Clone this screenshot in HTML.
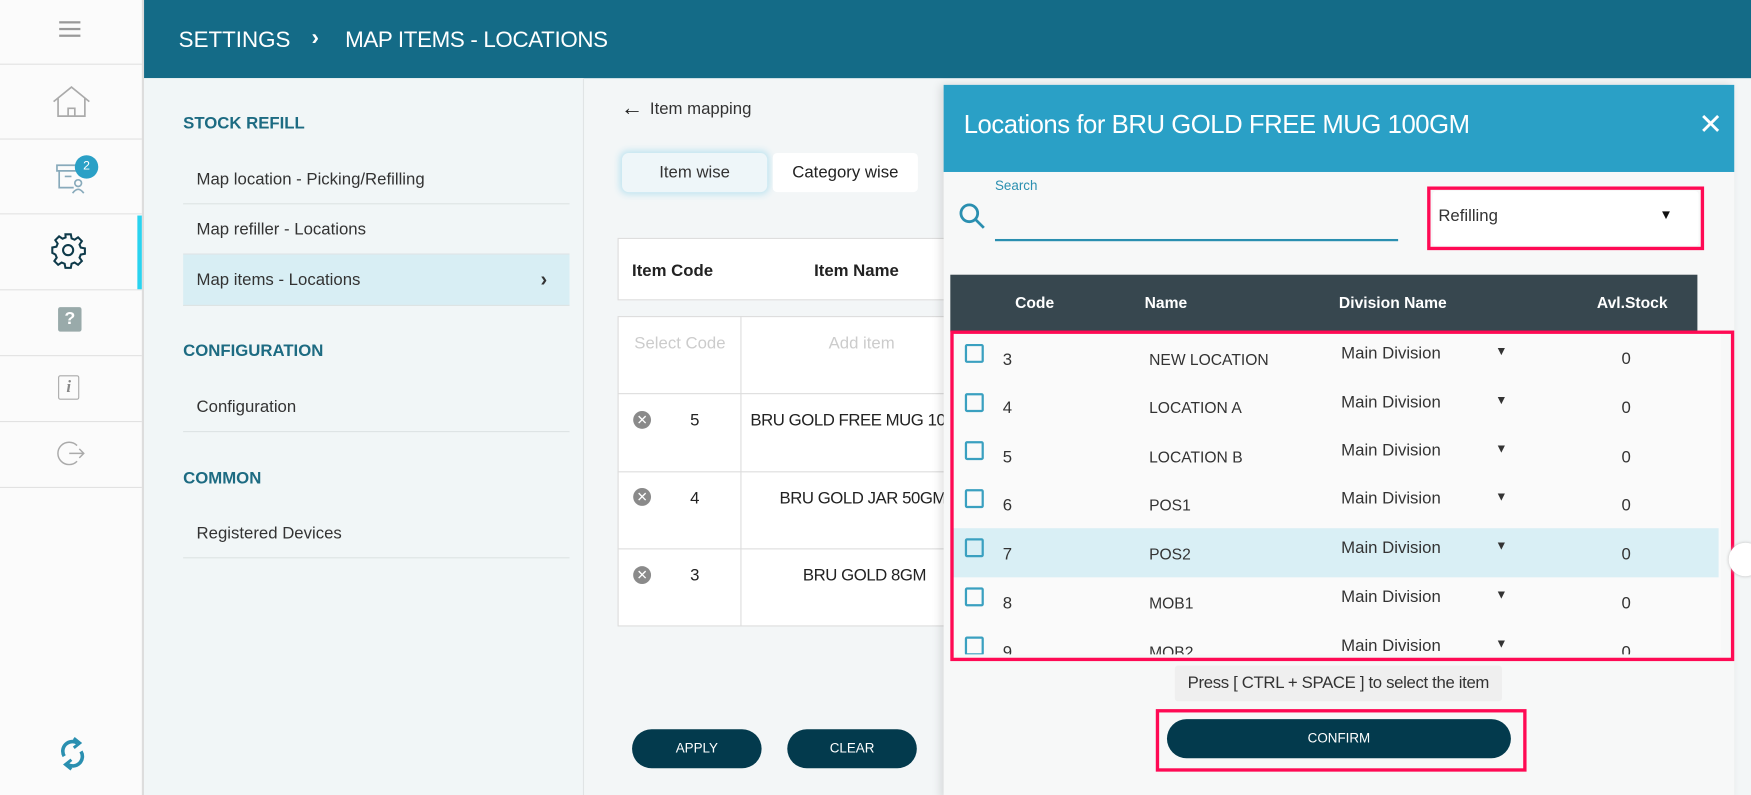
<!DOCTYPE html>
<html><head><meta charset="utf-8"><style>
*{box-sizing:border-box;margin:0;padding:0}
html,body{width:1751px;height:795px;overflow:hidden;background:#f3f6f7;font-family:"Liberation Sans",sans-serif}
#w{position:absolute;left:0;top:0;width:1568px;height:712px;transform:scale(1.11671);transform-origin:0 0;overflow:hidden}
.a{position:absolute}
.side{left:0;top:0;width:129px;height:712px;background:#fbfbfb;border-right:2px solid #ddd}
.sl{position:absolute;left:0;width:127px;height:1px;background:#e2e2e2}
.hdr{left:129px;top:0;width:1439px;height:70px;background:#146b87;color:#fff;font-size:20px}
.sp{left:129px;top:70px;width:394px;height:642px;background:#f1f6f7;border-right:1px solid #e0e4e5}
.h{position:absolute;left:35px;color:#1d6b82;font-weight:bold;font-size:15px}
.it{position:absolute;left:35px;width:346px;height:45px;line-height:45px;padding-left:12px;font-size:15px;color:#333;border-bottom:1px solid #dde3e4}
.cell{position:absolute;background:#fff;border:1px solid #ddd}
.btn{position:absolute;background:#033a4d;color:#fff;border-radius:18px;font-size:12px;text-align:center;line-height:35px}
.cb{position:absolute;left:13px;width:17px;height:17px;border:2px solid #3aa0c0;border-radius:2px}
.row{position:absolute;left:0;width:688px;height:44px;font-size:15px;color:#333}
.row span{position:absolute;top:15px}
</style></head><body><div id="w">
<div class="a side">
 <div class="a" style="left:53px;top:19px;width:19px;height:2px;background:#999;box-shadow:0 6px 0 #999,0 12px 0 #999"></div>
 <div class="sl" style="top:57px"></div><div class="sl" style="top:124px"></div><div class="sl" style="top:191px"></div><div class="sl" style="top:259px"></div><div class="sl" style="top:318px"></div><div class="sl" style="top:377px"></div><div class="sl" style="top:436px"></div>
 <svg class="a" style="left:46px;top:76px" width="36" height="30" viewBox="0 0 36 30" fill="none" stroke="#aaa" stroke-width="1.5"><path d="M2 15 L18 2 L34 15 M6 12 V28 H30 V12 M15 28 V21 H21 V28"/></svg>
 <svg class="a" style="left:48px;top:142px" width="34" height="32" viewBox="0 0 34 32" fill="none" stroke="#8ab" stroke-width="1.5"><path d="M3 6 H26 V11 H3 Z M5 11 V26 H18 M10 16 H16"/><circle cx="22" cy="22" r="3"/><path d="M17 31 Q22 24 27 31"/></svg>
 <div class="a" style="left:67px;top:139px;width:21px;height:21px;border-radius:50%;background:#2aa0c6;color:#fff;font-size:11px;text-align:center;line-height:21px">2</div>
 <svg class="a" style="left:44px;top:207px" width="34" height="34" viewBox="0 0 24 24" fill="none" stroke="#0e3a4a" stroke-width="1.3"><circle cx="12" cy="12" r="3.2"/><path d="M10.3 2h3.4l.5 2.6 1.9.8 2.2-1.5 2.4 2.4-1.5 2.2.8 1.9 2.6.5v3.4l-2.6.5-.8 1.9 1.5 2.2-2.4 2.4-2.2-1.5-1.9.8-.5 2.6h-3.4l-.5-2.6-1.9-.8-2.2 1.5-2.4-2.4 1.5-2.2-.8-1.9L2 13.7v-3.4l2.6-.5.8-1.9-1.5-2.2 2.4-2.4 2.2 1.5 1.9-.8z"/></svg>
 <div class="a" style="left:123px;top:193px;width:4px;height:66px;background:#2ad3ef"></div>
 <div class="a" style="left:52px;top:275px;width:21px;height:22px;background:#9aa;border-radius:2px;color:#fff;font-weight:bold;font-size:16px;text-align:center;line-height:22px">?</div>
 <div class="a" style="left:52px;top:336px;width:19px;height:22px;border:1.5px solid #aaa;border-radius:2px;color:#888;font-size:15px;font-weight:bold;font-style:italic;text-align:center;line-height:20px;font-family:'Liberation Serif',serif">i</div>
 <svg class="a" style="left:51px;top:394px" width="26" height="24" viewBox="0 0 26 24" fill="none" stroke="#aaa" stroke-width="1.3"><path d="M18 5 A10 10 0 1 0 18 19 M11 12 H24 M20 8 L24 12 L20 16"/></svg>
 <svg class="a" style="left:52px;top:660px" width="26" height="30" viewBox="0 0 24 28" fill="none" stroke="#2a8fb0" stroke-width="3"><path d="M5 16 A8 8 0 0 1 16 5 M19 12 A8 8 0 0 1 8 23"/><path d="M13 1 L18 5 L13 9 M11 19 L6 23 L11 27" stroke-width="2.5"/></svg>
</div>
<div class="a hdr"><span class="a" style="left:31px;top:25px">SETTINGS</span><span class="a" style="left:150px;top:23px;font-weight:bold">›</span><span class="a" style="left:180px;top:25px;letter-spacing:-0.3px">MAP ITEMS - LOCATIONS</span></div>
<div class="a sp">
 <div class="h" style="top:32px">STOCK REFILL</div>
 <div class="it" style="top:68px">Map location - Picking/Refilling</div>
 <div class="it" style="top:113px">Map refiller - Locations</div>
 <div class="it" style="top:158px;background:#d8eef4;height:46px">Map items - Locations<span style="position:absolute;right:20px;font-weight:bold;font-size:18px">›</span></div>
 <div class="h" style="top:236px">CONFIGURATION</div>
 <div class="it" style="top:272px">Configuration</div>
 <div class="h" style="top:350px">COMMON</div>
 <div class="it" style="top:385px">Registered Devices</div>
</div>
<div class="a" style="left:556px;top:86px;font-size:20px;color:#222">←</div>
<div class="a" style="left:582px;top:89px;font-size:15px;color:#333">Item mapping</div>
<div class="a" style="left:557px;top:137px;width:130px;height:35px;background:#eef6f9;border-radius:6px;box-shadow:0 0 6px 2px #bfe4f0;font-size:15px;color:#333;text-align:center;line-height:35px">Item wise</div>
<div class="a" style="left:692px;top:137px;width:130px;height:35px;background:#fff;border-radius:4px;font-size:15px;color:#222;text-align:center;line-height:35px">Category wise</div>
<div class="cell" style="left:553px;top:213px;width:320px;height:56px;font-size:15px;font-weight:bold;color:#222"><span class="a" style="left:12px;top:20px">Item Code</span><span class="a" style="left:175px;top:20px">Item Name</span></div>
<div class="cell" style="left:553px;top:283px;width:320px;height:278px"></div>
<div class="a" style="left:553px;top:352px;width:320px;height:1px;background:#ddd"></div>
<div class="a" style="left:553px;top:422px;width:320px;height:1px;background:#ddd"></div>
<div class="a" style="left:553px;top:491px;width:320px;height:1px;background:#ddd"></div>
<div class="a" style="left:663px;top:283px;width:1px;height:278px;background:#ddd"></div>
<div class="a" style="left:568px;top:299px;font-size:15px;color:#ccc">Select Code</div>
<div class="a" style="left:742px;top:299px;font-size:15px;color:#ccc">Add item</div>
<div class="a" style="left:567px;top:368px;width:16px;height:16px;border-radius:50%;background:#8a8a8a;color:#fff;font-size:12px;text-align:center;line-height:16px">✕</div>
<div class="a" style="left:567px;top:437px;width:16px;height:16px;border-radius:50%;background:#8a8a8a;color:#fff;font-size:12px;text-align:center;line-height:16px">✕</div>
<div class="a" style="left:567px;top:507px;width:16px;height:16px;border-radius:50%;background:#8a8a8a;color:#fff;font-size:12px;text-align:center;line-height:16px">✕</div>
<div class="a" style="left:618px;top:368px;font-size:15px;color:#222">5</div>
<div class="a" style="left:618px;top:438px;font-size:15px;color:#222">4</div>
<div class="a" style="left:618px;top:507px;font-size:15px;color:#222">3</div>
<div class="a" style="left:672px;top:368px;font-size:15px;color:#222;white-space:nowrap;letter-spacing:-0.4px">BRU GOLD FREE MUG 100GM</div>
<div class="a" style="left:698px;top:438px;font-size:15px;color:#222;white-space:nowrap;letter-spacing:-0.4px">BRU GOLD JAR 50GM</div>
<div class="a" style="left:719px;top:507px;font-size:15px;color:#222;letter-spacing:-0.4px">BRU GOLD 8GM</div>
<div class="btn" style="left:566px;top:653px;width:116px">APPLY</div>
<div class="btn" style="left:705px;top:653px;width:116px">CLEAR</div>
<!-- modal -->
<div class="a" style="left:845px;top:76px;width:708px;height:640px;background:#f7f8f8;box-shadow:-3px 0 8px rgba(0,0,0,.12)">
 <div class="a" style="left:0;top:0;width:708px;height:78px;background:#2aa0c6;color:#fff"><span class="a" style="left:18px;top:22px;font-size:23px;letter-spacing:-0.4px">Locations for BRU GOLD FREE MUG 100GM</span><span class="a" style="left:676px;top:20px;font-size:26px">✕</span></div>
 <svg class="a" style="left:13px;top:105px" width="26" height="26" viewBox="0 0 26 26" fill="none" stroke="#2a8fb0" stroke-width="2.5"><circle cx="10" cy="10" r="7.5"/><path d="M15.5 15.5 L23 23"/></svg>
 <div class="a" style="left:46px;top:83px;font-size:12px;color:#2a8fb0">Search</div>
 <div class="a" style="left:46px;top:138px;width:361px;height:2px;background:#2a8fb0"></div>
 <div class="a" style="left:433px;top:91px;width:248px;height:57px;border:3px solid #ff0a54"></div>
 <div class="a" style="left:438px;top:95px;width:238px;height:49px;background:#fff;border-radius:3px"></div>
 <div class="a" style="left:443px;top:109px;font-size:15px;color:#333">Refilling</div>
 <div class="a" style="left:641px;top:109px;font-size:12px;color:#111">▼</div>
 <div class="a" style="left:6px;top:170px;width:669px;height:51px;background:#37474f;color:#fff;font-size:14px;font-weight:bold"><span class="a" style="left:58px;top:17px">Code</span><span class="a" style="left:174px;top:17px">Name</span><span class="a" style="left:348px;top:17px">Division Name</span><span class="a" style="left:579px;top:17px">Avl.Stock</span></div>
 <div class="a" style="left:6px;top:221px;width:690px;height:289px;overflow:hidden;background:#fafafa">
  <div class="row" style="top:0"><div class="cb" style="top:11px"></div><span style="left:47px;top:17px">3</span><span style="left:178px;top:17px;font-size:14px">NEW LOCATION</span><span style="left:350px;top:11px">Main Division</span><span style="left:488px;top:12px;font-size:11px">▼</span><span style="left:601px;top:16px">0</span></div>
  <div class="row" style="top:44px"><div class="cb" style="top:11px"></div><span style="left:47px;top:16px">4</span><span style="left:178px;top:16px;font-size:14px">LOCATION A</span><span style="left:350px;top:11px">Main Division</span><span style="left:488px;top:12px;font-size:11px">▼</span><span style="left:601px;top:16px">0</span></div>
  <div class="row" style="top:88px"><div class="cb" style="top:10px"></div><span style="left:47px;top:16px">5</span><span style="left:178px;top:16px;font-size:14px">LOCATION B</span><span style="left:350px;top:10px">Main Division</span><span style="left:488px;top:11px;font-size:11px">▼</span><span style="left:601px;top:16px">0</span></div>
  <div class="row" style="top:132px"><div class="cb" style="top:9px"></div><span style="left:47px;top:15px">6</span><span style="left:178px;top:15px;font-size:14px">POS1</span><span style="left:350px;top:9px">Main Division</span><span style="left:488px;top:10px;font-size:11px">▼</span><span style="left:601px;top:15px">0</span></div>
  <div class="row" style="top:176px;background:#d9eff5"><div class="cb" style="top:9px"></div><span style="left:47px;top:15px">7</span><span style="left:178px;top:15px;font-size:14px">POS2</span><span style="left:350px;top:9px">Main Division</span><span style="left:488px;top:10px;font-size:11px">▼</span><span style="left:601px;top:15px">0</span></div>
  <div class="row" style="top:220px"><div class="cb" style="top:9px"></div><span style="left:47px;top:15px">8</span><span style="left:178px;top:15px;font-size:14px">MOB1</span><span style="left:350px;top:9px">Main Division</span><span style="left:488px;top:10px;font-size:11px">▼</span><span style="left:601px;top:15px">0</span></div>
  <div class="row" style="top:264px"><div class="cb" style="top:9px"></div><span style="left:47px;top:15px">9</span><span style="left:178px;top:15px;font-size:14px">MOB2</span><span style="left:350px;top:9px">Main Division</span><span style="left:488px;top:10px;font-size:11px">▼</span><span style="left:601px;top:15px">0</span></div>
  <div class="a" style="left:690px;top:0;width:5px;height:270px;background:#999"></div>
 </div>
 <div class="a" style="left:6px;top:220px;width:702px;height:296px;border:3px solid #ff0a54"></div>
 <div class="a" style="left:207px;top:520px;width:293px;height:32px;background:#efefef;border-radius:3px;font-size:15px;color:#333;text-align:center;line-height:32px;letter-spacing:-0.3px">Press [ CTRL + SPACE ] to select the item</div>
 <div class="a" style="left:190px;top:559px;width:332px;height:56px;border:3px solid #ff0a54"></div>
 <div class="btn" style="left:200px;top:568px;width:308px;height:35px">CONFIRM</div>
</div>
<div class="a" style="left:1548px;top:486px;width:30px;height:30px;border-radius:50%;background:#fff;box-shadow:0 0 3px #bbb"></div>
</div></body></html>
